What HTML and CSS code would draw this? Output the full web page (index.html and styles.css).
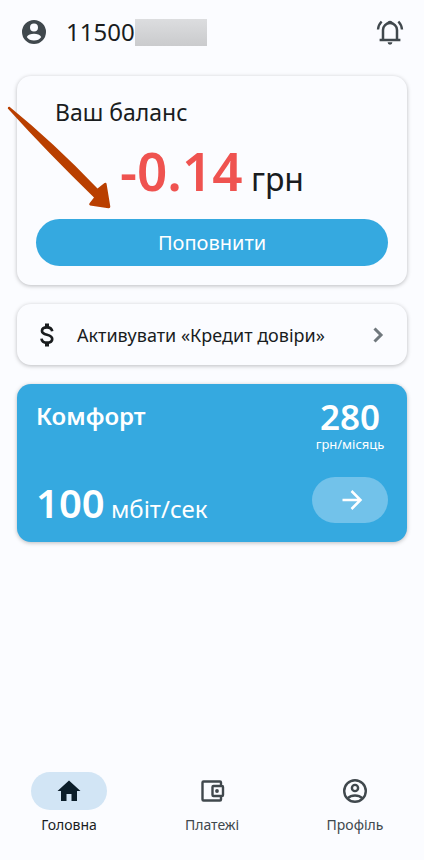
FILE: index.html
```html
<!DOCTYPE html>
<html lang="uk">
<head>
<meta charset="utf-8">
<meta name="viewport" content="width=device-width, initial-scale=1">
<title>Ваш баланс</title>
<link rel="stylesheet" href="styles.css">
</head>
<body>
<div class="app">
  <header class="topbar">
    <svg class="icon icon-muted" viewBox="0 0 24 24" aria-hidden="true"><path fill-rule="evenodd" d="M12 0a12 12 0 1 0 0 24a12 12 0 0 0 0-24ZM12 3.6a4 4 0 1 1 0 8a4 4 0 0 1 0-8ZM12 20.6c-3.1 0-5.8-1.3-7.2-3.6c1-2.2 4.2-3.3 7.2-3.3s6.200 1.100 7.200 3.300c-1.400 2.300-4.100 3.600-7.200 3.600Z"/></svg>
    <div class="account"><span>11500</span><span class="redacted"></span></div>
    <button class="icon-button" type="button" aria-label="Сповіщення">
      <svg class="bell" viewBox="0 0 28 28" aria-hidden="true">
        <path d="M7 21.500v-9.500a7 7 0 0 1 14 0v9.500M3.600 21.900h20.800" fill="none" stroke="currentColor" stroke-width="2.500"/>
        <path d="M11.200 5.500a2.800 2.800 0 1 1 5.600 0ZM11.600 24.300h4.800a2.400 2.400 0 0 1-4.800 0Z" fill="currentColor"/>
        <path d="M2 11.500c.2-3.400 1.400-5.600 3.600-8M26 11.500c-.2-3.400-1.400-5.600-3.600-8" fill="none" stroke="currentColor" stroke-width="2.400"/>
      </svg>
    </button>
  </header>

  <main class="content">
    <section class="card balance">
      <h1 class="balance-title">Ваш баланс</h1>
      <p class="balance-sum"><strong>-0.14</strong> <span>грн</span></p>
      <button class="pay" type="button">Поповнити</button>
      <svg class="pointer" viewBox="0 0 104 104" aria-hidden="true"><path d="M2.500.8Q47 37 90.500 82.500L97.500 77Q99.300 76 99.600 78L103.300 100.500Q103.500 102.500 101.400 102.300L83 99.400Q81.300 98.500 82.700 97L87 91.500Q41 47 .8 2.600Q.6.400 2.500.8Z"/></svg>
    </section>

    <a class="card credit" href="#credit">
      <svg class="dollar" viewBox="0 0 16 24" aria-hidden="true"><path d="M8 .5v4.500M8 19v4.500" stroke-width="4"/><path d="M13.200 8.300C12.800 5.400 11.200 4.300 8 4.300C4.900 4.300 3 5.700 3 8C3 13.100 13.200 10.500 13.200 15.900C13.200 18.400 11.200 19.700 8 19.700C4.700 19.700 2.800 18.300 2.500 15.600" stroke-width="2.700"/></svg>
      <span class="credit-text">Активувати «Кредит довіри»</span>
      <svg class="chevron" viewBox="0 0 10 16" aria-hidden="true"><path d="M1.500 1.500L8 8L1.500 14.500"/></svg>
    </a>

    <section class="card tariff">
      <h2 class="tariff-name">Комфорт</h2>
      <div class="price"><strong>280</strong><span>грн/місяць</span></div>
      <p class="speed"><strong>100</strong> <span>мбіт/сек</span></p>
      <button class="go" type="button" aria-label="Деталі тарифу">
        <svg class="arrow" viewBox="0 0 20 20" aria-hidden="true"><path d="M.5 10H18M9.500 1L18.500 10L9.500 19"/></svg>
      </button>
    </section>
  </main>

  <nav class="tabs">
    <a class="tab active" href="#home">
      <span class="pill"><svg class="icon" viewBox="0 0 24 24" aria-hidden="true"><path d="M12 1.500L23.500 12H20V22H14.500V15H9.500V22H4V12H.5Z"/></svg></span>
      <span>Головна</span>
    </a>
    <a class="tab" href="#payments">
      <span class="pill"><svg class="icon line" viewBox="0 0 24 24" aria-hidden="true"><path d="M21 6.500V3.500Q21 2.500 20 2.500H3.500Q2.500 2.500 2.500 3.500V20.500Q2.500 21.500 3.500 21.500H20Q21 21.500 21 20.500V17.500M13.500 7H22Q23 7 23 8V16Q23 17 22 17H13.500Q12.500 17 12.500 16V8Q12.500 7 13.500 7Z"/><circle class="dot" cx="17" cy="12" r="1.900"/></svg></span>
      <span>Платежі</span>
    </a>
    <a class="tab" href="#profile">
      <span class="pill"><svg class="icon line" viewBox="0 0 24 24" aria-hidden="true"><circle cx="12" cy="12" r="10.800"/><circle cx="12" cy="9" r="3.100"/><path d="M4.800 19.200C8.500 15.500 15.500 15.500 19.200 19.200"/></svg></span>
      <span>Профіль</span>
    </a>
  </nav>
</div>
</body>
</html>
```
FILE: styles.css
```css
* { box-sizing: border-box; }

body {
  margin: 0;
  background: #fbfcff;
  color: #191c1e;
  font-family: "Noto Sans", sans-serif;
}

h1, h2, p { margin: 0; font-weight: 400; }
strong { font-weight: 600; }
a { color: inherit; text-decoration: none; }
button { border: 0; padding: 0; font: inherit; cursor: pointer; }
svg { display: block; flex: none; overflow: visible; }

.app { min-height: 100vh; display: flex; flex-direction: column; }

.icon { width: 24px; height: 24px; fill: currentColor; }
.icon-muted { color: #40484d; }
.line { fill: none; stroke: currentColor; stroke-width: 2.4; }
.line .dot { fill: currentColor; stroke: none; }

.topbar { display: flex; align-items: center; height: 64px; padding: 0 20px 0 22px; }
.account { display: flex; align-items: center; margin-left: 20px; font-size: 24px; line-height: 32px; }
.redacted { width: 72px; height: 27px; background: linear-gradient(#dcdddf, #cacbcd); }
.icon-button { margin-left: auto; background: none; color: #40484d; }
.bell { width: 28px; height: 28px; }

.content { display: flex; flex-direction: column; gap: 19px; padding: 12px 17px; }
.card { background: #fbfcff; border-radius: 14px; box-shadow: 0 1px 4px rgba(0, 0, 0, .26); }

.balance { position: relative; padding: 20px 19px 19px; }
.balance-title { padding-left: 19px; font-size: 23px; line-height: 32px; }
.balance-sum { margin: 8px 0 14px; text-align: center; font-size: 32px; line-height: 40px; }
.balance-sum strong { color: #ef5350; font-size: 53px; line-height: 69px; }
.pay { display: block; width: 100%; height: 47px; border-radius: 24px; background: #35a9e0; color: #fff; font-size: 20px; }
.pointer { position: absolute; left: -10px; top: 30px; width: 104px; height: 104px; fill: #b93f00; }

.credit { display: flex; align-items: center; height: 61px; padding: 0 24px 0 22px; }
.dollar { width: 16px; height: 24px; fill: none; stroke: currentColor; }
.credit-text { flex: 1; margin-left: 22px; font-size: 18px; line-height: 24px; white-space: nowrap; }
.chevron { width: 10px; height: 16px; fill: none; stroke: #70787d; stroke-width: 3; }

.tariff {
  display: grid;
  grid-template-columns: 1fr auto;
  row-gap: 24px;
  padding: 14px 19px 19px;
  background: #35a9e0;
  color: #fff;
}
.tariff-name { font-size: 24px; font-weight: 600; line-height: 36px; }
.price { display: flex; flex-direction: column; align-items: center; width: 76px; font-size: 13px; line-height: 18px; }
.price strong { font-size: 35px; line-height: 37px; }
.speed { align-self: end; font-size: 24px; line-height: 24px; white-space: nowrap; }
.speed strong { font-size: 40px; line-height: 40px; }
.go { display: grid; place-items: center; width: 76px; height: 46px; padding-left: 3px; border-radius: 23px; background: #72c2ea; }
.arrow { width: 20px; height: 20px; fill: none; stroke: #fff; stroke-width: 2.5; }

.tabs { display: flex; justify-content: space-between; margin-top: auto; padding: 0 31px 25px; }
.tab { display: flex; flex-direction: column; align-items: center; gap: 5px; width: 76px; color: #40484d; font-size: 14px; line-height: 20px; }
.pill { display: grid; place-items: center; width: 100%; height: 38px; border-radius: 19px; }
.active { color: #191c1e; }
.active .pill { background: #d2e5f5; color: #0b1d29; }
```
